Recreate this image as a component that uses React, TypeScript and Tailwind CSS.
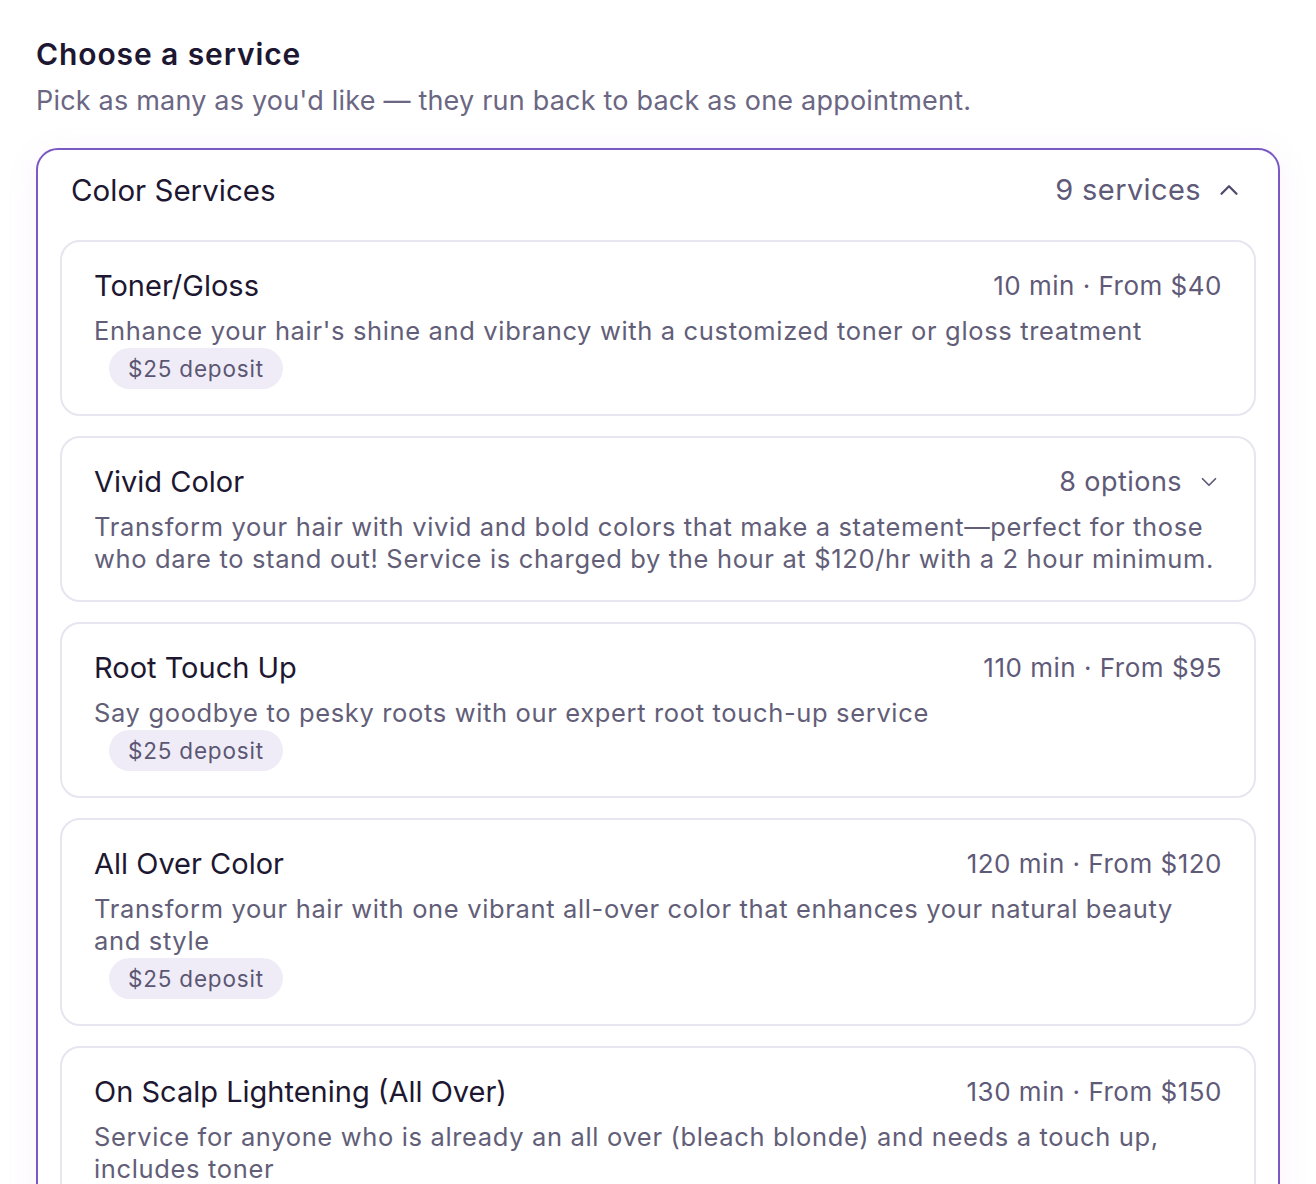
import { ChevronDown, ChevronUp } from 'lucide-react';

type Service = {
  name: string;
  description: string;
  meta?: string;
  options?: number;
  deposit?: string;
};

const services: Service[] = [
  {
    name: 'Toner/Gloss',
    meta: '10 min · From $40',
    description: "Enhance your hair's shine and vibrancy with a customized toner or gloss treatment",
    deposit: '$25 deposit',
  },
  {
    name: 'Vivid Color',
    options: 8,
    description:
      'Transform your hair with vivid and bold colors that make a statement—perfect for those who dare to stand out! Service is charged by the hour at $120/hr with a 2 hour minimum.',
  },
  {
    name: 'Root Touch Up',
    meta: '110 min · From $95',
    description: 'Say goodbye to pesky roots with our expert root touch-up service',
    deposit: '$25 deposit',
  },
  {
    name: 'All Over Color',
    meta: '120 min · From $120',
    description: 'Transform your hair with one vibrant all-over color that enhances your natural beauty and style',
    deposit: '$25 deposit',
  },
  {
    name: 'On Scalp Lightening (All Over)',
    meta: '130 min · From $150',
    description: 'Service for anyone who is already an all over (bleach blonde) and needs a touch up, includes toner',
    deposit: '$25 deposit',
  },
];

function ServiceCard({ service }: { service: Service }) {
  return (
    <div className="rounded-[20px] border-2 border-[#e7e5ef] bg-white px-[32px] pb-[25px] pt-[26px]">
      <div className="flex items-center justify-between gap-6">
        <h3 className="text-[29px] leading-[36px] text-[#1d1731]">{service.name}</h3>
        {service.options ? (
          <div className="flex items-center gap-[14px] text-[#5f5a78]">
            <span className="text-[27px] leading-[36px] tracking-[0.45px]">{service.options} options</span>
            <ChevronDown className="h-[26px] w-[26px]" strokeWidth={1.6} />
          </div>
        ) : (
          <span className="text-[26px] leading-[36px] tracking-[0.5px] text-[#5f5a78]">{service.meta}</span>
        )}
      </div>
      <p className="mt-[11px] text-[25.5px] leading-[32px] tracking-[0.65px] text-[#625e78]">
        {service.description}
      </p>
      {service.deposit && (
        <span className="ml-[15px] mt-[1px] flex h-[41px] w-fit items-center rounded-full bg-[#efecf7] px-[19px] text-[22.5px] tracking-[0.8px] text-[#5b5773]">
          {service.deposit}
        </span>
      )}
    </div>
  );
}

export default function App() {
  return (
    <div className="min-h-screen bg-white px-[36px] pt-[34px] font-['Inter',sans-serif]">
      <h1 className="text-[30px] font-semibold leading-[40px] tracking-[0.9px] text-[#1d1731]">Choose a service</h1>
      <p className="mt-[9px] text-[27px] leading-[36px] tracking-[0.2px] text-[#6b6783]">
        Pick as many as you'd like — they run back to back as one appointment.
      </p>

      <div className="mt-[29px] rounded-[22px] border-2 border-[#7b59c4] bg-white px-[22px] pb-[22px] shadow-[0_6px_30px_rgba(214,140,214,0.12)]">
        <div className="flex items-center justify-between pb-[30px] pl-[11px] pr-[12px] pt-[20px]">
          <h2 className="text-[29.5px] leading-[40px] text-[#1d1731]">Color Services</h2>
          <div className="flex items-center gap-[13px] text-[#5f5a78]">
            <span className="text-[29px] leading-[40px] tracking-[0.4px]">9 services</span>
            <ChevronUp className="h-[30px] w-[30px] text-[#4f4a6b]" strokeWidth={1.8} />
          </div>
        </div>
        <div className="flex flex-col gap-[20px]">
          {services.map((s) => (
            <ServiceCard key={s.name} service={s} />
          ))}
        </div>
      </div>
    </div>
  );
}
